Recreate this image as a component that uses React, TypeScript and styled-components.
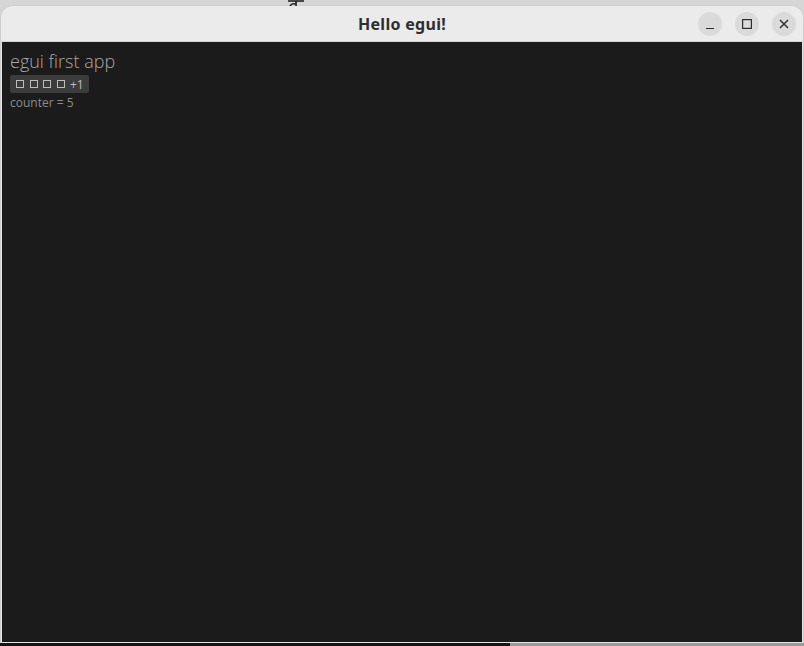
import styled, { createGlobalStyle } from "styled-components";

const GlobalStyle = createGlobalStyle`
  html, body {
    margin: 0;
    padding: 0;
    width: 804px;
    height: 646px;
    overflow: hidden;
  }
  #root {
    height: 100%;
  }
`;

const Desktop = styled.div`
  width: 804px;
  height: 646px;
  display: flex;
  flex-direction: column;
  background: #d6d6d6;
  position: relative;
`;

const TopStrip = styled.div`
  height: 6px;
  flex: none;
  position: relative;
`;

const Glyph = styled.svg`
  position: absolute;
  left: 286px;
  top: 0;
`;

const Window = styled.div`
  flex: 1;
  margin: 0 1px;
  display: flex;
  flex-direction: column;
  border-radius: 12px 12px 0 0;
  overflow: hidden;
  box-shadow: 0 0 0 1px #cfcfcf;
`;

const TitleBar = styled.div`
  height: 36px;
  flex: none;
  background: #ebebeb;
  display: flex;
  align-items: center;
  justify-content: center;
  position: relative;
  border-bottom: 1px solid #d4d4d4;
  box-sizing: border-box;
`;

const Title = styled.span`
  font-family: "Noto Sans", "DejaVu Sans", sans-serif;
  font-weight: 700;
  font-size: 16px;
  color: #2e2e2e;
  letter-spacing: 0.3px;
`;

const Controls = styled.div`
  position: absolute;
  right: 7px;
  top: 6px;
  display: flex;
  gap: 13px;
`;

const ControlButton = styled.div`
  width: 24px;
  height: 24px;
  border-radius: 50%;
  background: #dadada;
  display: flex;
  align-items: center;
  justify-content: center;
`;

const Body = styled.div`
  flex: 1;
  background: #1b1b1b;
  border: 1px solid #e4e4e4;
  border-top: none;
  padding: 8px 8px;
  display: flex;
  flex-direction: column;
  align-items: flex-start;
  font-family: "Open Sans", "Noto Sans", sans-serif;
`;

const Heading = styled.div`
  font-size: 18px;
  line-height: 22px;
  font-weight: 300;
  color: #a8a8a8;
`;

const Button = styled.button`
  margin-top: 3px;
  height: 18px;
  padding: 0 5px 0 6px;
  border: none;
  border-radius: 2px;
  background: #3c3c3c;
  color: #bcbcbc;
  display: flex;
  align-items: center;
  gap: 5.5px;
  font-family: inherit;
  font-weight: 400;
  font-size: 12px;
  cursor: pointer;
`;

const Tofu = styled.span`
  box-sizing: border-box;
  width: 8px;
  height: 8px;
  border: 1px solid #bcbcbc;
`;

const Label = styled.div`
  margin-top: 2px;
  font-size: 12px;
  line-height: 16px;
  font-weight: 400;
  color: #8c8c8c;
`;

const BottomStrip = styled.div`
  height: 3px;
  flex: none;
  display: flex;
`;

const StripPart = styled.div<{ $color: string; $width?: string }>`
  background: ${(p) => p.$color};
  width: ${(p) => p.$width ?? "auto"};
  flex: ${(p) => (p.$width ? "none" : "1")};
`;

function App() {
  return (
    <>
      <GlobalStyle />
      <Desktop>
        <TopStrip>
          <Glyph width="20" height="6" viewBox="0 0 20 6">
            <path d="M2 1 H18 M10 1 V6 M4 6 Q6 3 9 4" stroke="#1a1a1a" strokeWidth="1.6" fill="none" />
          </Glyph>
        </TopStrip>
        <Window>
          <TitleBar>
            <Title>Hello egui!</Title>
            <Controls>
              <ControlButton>
                <svg width="10" height="10" viewBox="0 0 10 10">
                  <path d="M1 9.5 H9" stroke="#2e2e2e" strokeWidth="1.2" />
                </svg>
              </ControlButton>
              <ControlButton>
                <svg width="10" height="10" viewBox="0 0 10 10">
                  <rect x="0.6" y="0.6" width="8.8" height="8.8" stroke="#2e2e2e" strokeWidth="1.2" fill="none" />
                </svg>
              </ControlButton>
              <ControlButton>
                <svg width="10" height="10" viewBox="0 0 10 10">
                  <path d="M1 1 L9 9 M9 1 L1 9" stroke="#2e2e2e" strokeWidth="1.5" />
                </svg>
              </ControlButton>
            </Controls>
          </TitleBar>
          <Body>
            <Heading>egui first app</Heading>
            <Button>
              <Tofu />
              <Tofu />
              <Tofu />
              <Tofu />
              <span>+1</span>
            </Button>
            <Label>counter = 5</Label>
          </Body>
        </Window>
        <BottomStrip>
          <StripPart $color="#141414" $width="510px" />
          <StripPart $color="#9a9a9a" />
        </BottomStrip>
      </Desktop>
    </>
  );
}

export default App;
